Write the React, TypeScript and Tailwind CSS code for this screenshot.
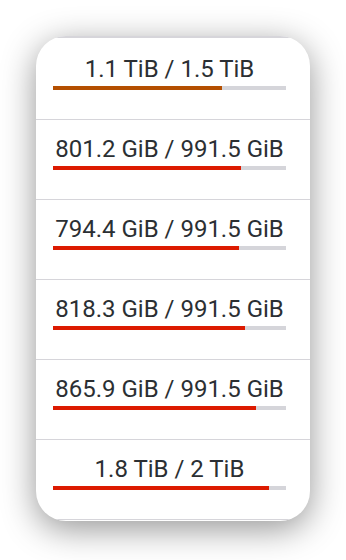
import React from "react";

const rows = [
  { label: "1.1 TiB / 1.5 TiB", pct: 72.5, color: "bg-[#b44f00]" },
  { label: "801.2 GiB / 991.5 GiB", pct: 80.7, color: "bg-[#dc1a00]" },
  { label: "794.4 GiB / 991.5 GiB", pct: 80.0, color: "bg-[#dc1a00]" },
  { label: "818.3 GiB / 991.5 GiB", pct: 82.5, color: "bg-[#dc1a00]" },
  { label: "865.9 GiB / 991.5 GiB", pct: 87.3, color: "bg-[#dc1a00]" },
  { label: "1.8 TiB / 2 TiB", pct: 92.7, color: "bg-[#dc1a00]" },
];

export default function App() {
  return (
    <div className="w-[346px] h-[560px] bg-white pt-[36px] pl-[36px]" style={{ fontFamily: "Roboto, 'Noto Sans', sans-serif" }}>
      <div className="w-[274px] h-[485px] rounded-[30px] bg-white overflow-hidden shadow-[0_8px_34px_rgba(0,0,0,0.42)] flex flex-col">
        <div className="h-[2px] bg-[#d6d5da] shrink-0" />
        {rows.map((r, i) => (
          <div
            key={i}
            className={`shrink-0 border-b border-[#d6d5da] pl-[17px] pr-[24px] ${i === 0 ? "h-[82px] pt-[17px]" : "h-[80px] pt-[15px]"}`}
          >
            <div className="text-[24px] leading-[28px] text-[#2b2f33] text-center whitespace-nowrap">{r.label}</div>
            <div className="mt-[3px] h-[4px] bg-[#d5d5da] w-full">
              <div className={`h-full ${r.color}`} style={{ width: `${r.pct}%` }} />
            </div>
          </div>
        ))}
      </div>
    </div>
  );
}
